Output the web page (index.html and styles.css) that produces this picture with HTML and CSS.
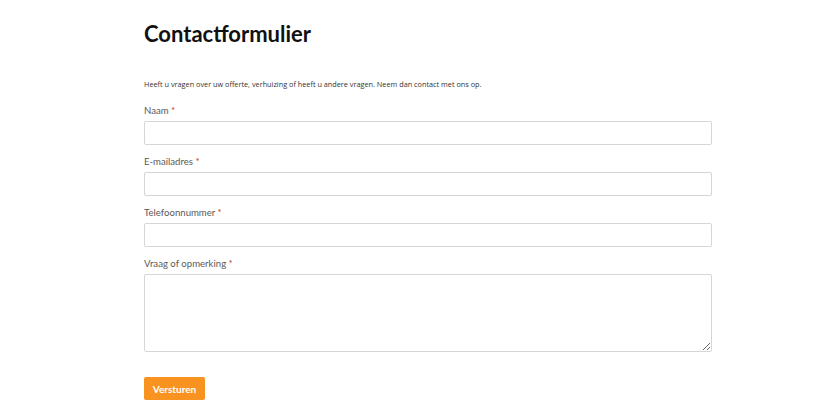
FILE: index.html
```html
<!DOCTYPE html>
<html lang="nl">
<head>
<meta charset="utf-8">
<title>Contactformulier</title>
<link rel="stylesheet" href="styles.css">
</head>
<body>
<main class="page">
  <h1 class="title">Contactformulier</h1>
  <p class="intro">Heeft u vragen over uw offerte, verhuizing of heeft u andere vragen. Neem dan contact met ons op.</p>
  <form class="form">
    <div class="field">
      <label class="label">Naam <span class="req">*</span></label>
      <input class="input" type="text">
    </div>
    <div class="field">
      <label class="label">E-mailadres <span class="req">*</span></label>
      <input class="input" type="email">
    </div>
    <div class="field">
      <label class="label">Telefoonnummer <span class="req">*</span></label>
      <input class="input" type="tel">
    </div>
    <div class="field">
      <label class="label">Vraag of opmerking <span class="req">*</span></label>
      <textarea class="textarea"></textarea>
    </div>
    <button class="btn" type="button">Versturen</button>
  </form>
</main>
</body>
</html>
```

FILE: styles.css
```css
* { box-sizing: border-box; }
html, body { margin: 0; padding: 0; background: #fff; }
body { font-family: "Open Sans", "DejaVu Sans", sans-serif; color: #333; }
.page { width: 568px; margin-left: 144px; padding-top: 19px; }
.title {
  font-family: Lato, "Open Sans", sans-serif;
  font-weight: 700;
  font-size: 22px;
  line-height: 30px;
  margin: 0;
  color: #111;
}
.intro {
  font-size: 7.3px;
  line-height: 12px;
  margin: 29px 0 0;
  color: #333;
}
.form { display: flex; flex-direction: column; margin-top: 14px; }
.field { display: flex; flex-direction: column; margin-bottom: 10px; }
.label {
  font-family: Lato, "Open Sans", sans-serif;
  font-size: 9.6px;
  line-height: 14px;
  color: #5a5a5a;
  margin-bottom: 3px;
}
.req { color: #c0392b; }
.input, .textarea {
  width: 568px;
  border: 1px solid #d6d6d6;
  border-radius: 2px;
  background: #fff;
  margin: 0;
  padding: 4px 6px;
  font: inherit;
}
.input { height: 24px; }
.textarea { height: 78px; resize: vertical; display: block; }
.btn {
  align-self: flex-start;
  margin-top: 15px;
  width: 61px;
  height: 23px;
  border: 0;
  border-radius: 2px;
  background: #f7931e;
  color: #fff;
  font-family: Lato, "Open Sans", sans-serif;
  font-weight: 700;
  font-size: 10px;
  padding: 0;
}
```
